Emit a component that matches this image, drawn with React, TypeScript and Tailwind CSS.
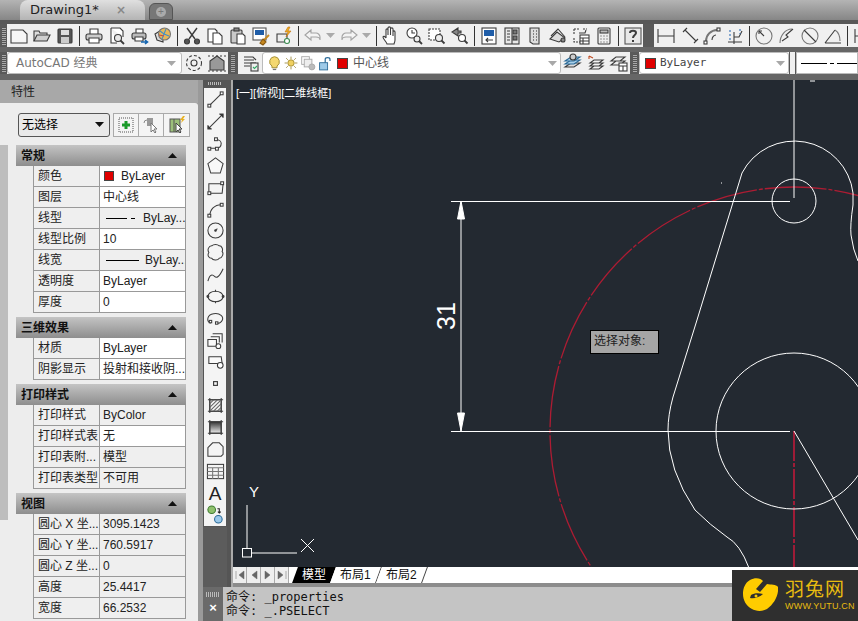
import React from "react";

const S = "#3c3c3c";
const G = "#a3a3a3";
type N = React.ReactNode;
const I = ({ children, size = 20 }: { children: N; size?: number }) => (
  <svg width={size} height={size} viewBox="0 0 20 20" fill="none" stroke={S} strokeWidth="1.1">{children}</svg>
);

const icons: Record<string, N> = {
  new: <path d="M2 4h12l4 4v9H2z" fill="#f6f6f6" />,
  open: <><path d="M2 15V5h5l1 2h7v2" fill="#ddd" /><path d="M2 15l3-6h13l-3 6z" fill="#cfcfcf" /></>,
  save: <><rect x="3" y="3" width="14" height="14" rx="1" fill="#555" /><rect x="6" y="4" width="8" height="5" fill="#ddd" stroke="none" /><rect x="6" y="11" width="8" height="6" fill="#ccc" stroke="none" /></>,
  print: <><path d="M6 8V3h8v5" fill="#fff" /><rect x="2" y="8" width="16" height="6" rx="2" fill="#ccc" /><path d="M5 12h10v5H5z" fill="#fff" /></>,
  preview: <><path d="M4 2h9l3 3v6M4 2v15h6" fill="#fff" /><circle cx="11" cy="12" r="3.5" fill="#e8e8e8" /><path d="M13.5 14.5l3.5 3.5" strokeWidth="1.8" /></>,
  plot: <><path d="M6 7V3h7v4" fill="#fff" /><rect x="2" y="7" width="14" height="6" rx="2" fill="#bbb" /><path d="M5 11h8v4H5z" fill="#fff" /><path d="M11 16h6m-2-2l2.5 2-2.5 2" stroke="#1565b0" strokeWidth="1.6" /></>,
  publish: <><path d="M2 8l8-5v13l-6-2z" fill="#ddd" /><circle cx="11.5" cy="8" r="6" fill="#e6b85a" stroke="#777" /><path d="M7 5l4 3 2-5M9 13l2-5 5 2" stroke="#3f8fc9" /><path d="M6 9l5 1" stroke="#c9473f" /></>,
  cut: <><path d="M5 2l8 11M15 2L7 13" strokeWidth="1.4" /><circle cx="5" cy="15.5" r="2.5" fill="#555" /><circle cx="15" cy="15.5" r="2.5" fill="#555" /></>,
  copy: <><path d="M3 3h7l2 2v11H3z" fill="#fff" /><path d="M8 7h6l3 3v8H8z" fill="#fff" /></>,
  paste: <><rect x="3" y="4" width="11" height="13" rx="1" fill="#c9c9c9" /><rect x="6" y="2" width="5" height="3" fill="#888" /><path d="M9 8h6l2 2v8H9z" fill="#fff" /></>,
  match: <><rect x="2" y="2" width="13" height="12" fill="#fff" stroke="#555" /><rect x="4" y="4" width="9" height="5" fill="#1f5da8" stroke="none" /><path d="M18 9l-6 6" stroke="#c8891f" strokeWidth="1.8" /><path d="M12 13l3 3-3 3-3-2z" fill="#c8891f" stroke="#8a5a10" /></>,
  block: <><path d="M3 8h10v8H3z" fill="#eee" /><circle cx="13" cy="15" r="2.5" fill="#fff" stroke="#3a8a50" /><path d="M14 1l-3 5h3l-2 5 5-6h-3l2-4z" fill="#f0b020" stroke="#c07010" strokeWidth=".6" /></>,
  undo: <path d="M8 4L2 9l6 5v-3h5c2 0 4 1 4 3v-3c0-2-2-4-4-4H8z" stroke={G} fill="#f4f4f4" />,
  redo: <path d="M12 4l6 5-6 5v-3H7c-2 0-4 1-4 3v-3c0-2 2-4 4-4h5z" stroke={G} fill="#f4f4f4" />,
  pan: <path d="M6 18c-1-3-4-5-4-7 0-1 2-1 3 1V4c0-1.500 2-1.500 2 0v5-7c0-1.500 2.500-1.500 2.500 0v7-6c0-1.500 2.500-1.500 2.500 0v7-4c0-1.500 2-1.500 2 0v8c0 2-1 3-1 4z" fill="#fff" />,
  zreal: <><circle cx="8" cy="7" r="5" fill="#fff" /><path d="M8 4v3h3" /><circle cx="13" cy="13" r="3" fill="#eee" /><path d="M15 15l3 3" strokeWidth="1.8" /></>,
  zwin: <><rect x="2" y="3" width="11" height="11" fill="#fff" strokeDasharray="2 1" /><circle cx="12" cy="12" r="3.5" fill="#eee" /><path d="M14.500 14.500l3 3" strokeWidth="1.800" /></>,
  zprev: <><path d="M8 2L2 6l6 4V7h3V5H8z" fill="#888" /><circle cx="12" cy="12" r="3.500" fill="#fff" /><path d="M14.500 14.500l3 3" strokeWidth="1.800" /></>,
  props: <><rect x="3" y="2" width="14" height="16" fill="#fff" /><rect x="5" y="4" width="10" height="6" fill="#1f5da8" stroke="none" /><path d="M14 14H7m2-2l-2 2 2 2" /></>,
  design: <><rect x="3" y="2" width="14" height="16" fill="#e8e8e8" /><path d="M10 2v16" /><path d="M5 5h3M5 8h3M5 11h3M5 14h3" /><rect x="11" y="4" width="4" height="4" fill="#777" /><rect x="11" y="10" width="4" height="4" fill="#777" /></>,
  tools: <><path d="M5 2h9v16H8l-3-2z" fill="#ddd" /><path d="M8 5h1m2 0h1M8 8h1m2 0h1M8 11h1m2 0h1M8 14h1m2 0h1" stroke="#666" strokeWidth="1.500" /></>,
  sheet: <><path d="M2 13l7-7 8 6-6 4z" fill="#ddd" /><path d="M3 10l7-7 7 8" /><circle cx="15" cy="14" r="2" fill="#888" /></>,
  markup: <><path d="M3 3h5M3 3v5M12 3h4M3 12v4h6" strokeDasharray="2 1" /><path d="M8 7h6l1-3" /><rect x="9" y="9" width="9" height="9" fill="#fff" /><path d="M9 12h9M9 15h9M12 12v6" /></>,
  calc: <><rect x="4" y="2" width="12" height="16" rx="1" fill="#eee" /><rect x="6" y="4" width="8" height="3" fill="#bbb" /><path d="M6.500 10h1m2 0h1m2 0h1M6.500 13h1m2 0h1m2 0h1M6.500 16h1m2 0h1m2 0h1" /></>,
  help: <><rect x="2" y="2" width="16" height="16" fill="#e8e8e8" stroke="#555" /><path d="M7 7c0-3 6-3 6 0 0 2-3 2-3 5" strokeWidth="2" /><path d="M10 14v2" strokeWidth="2" /></>,
  dlin: <path d="M2 3v14M18 3v14M2 10h16" />,
  dali: <path d="M4 6l4-4M15 17l4-4M6 4l11 11" />,
  darc: <><path d="M4 15C4 9 9 4 15 4" strokeWidth="1.800" stroke="#777" /><rect x="2" y="15" width="3" height="3" fill="#fff" /><rect x="15" y="2" width="3" height="3" fill="#fff" /><path d="M10 14c0-3 2-5 4-5" /></>,
  dord: <><path d="M3 16h14M9 6v12M9 11h5l3-6" /><path d="M5 4v12M15 3v5" stroke="#2f6db5" strokeDasharray="2 2" /></>,
  drad: <><circle cx="10" cy="10" r="8" stroke="#777" /><path d="M10 10L5 5" /><path d="M5 5h3M5 5v3" /></>,
  djog: <><path d="M3 17C3 10 8 3 15 3" stroke="#777" /><path d="M5 15l6-4-2-2 7-6" /></>,
  ddia: <><circle cx="10" cy="10" r="8" stroke="#777" /><path d="M4 4l12 12" /></>,
  dang: <><path d="M2 17h16M2 17L12 4" /><path d="M12 4c3 2 5 6 5 11" stroke="#777" /></>,
  dq: <><path d="M3 3v14M3 10h8" /><path d="M11 3h6v6" stroke="#d09030" /></>,
  layer: <><path d="M3 4h9l3 3M3 7h10M3 10h12M3 13h6" /><rect x="10" y="10" width="7" height="8" fill="#eee" /><path d="M12 14l1.500 1.500L16 13" stroke="#3a6" /></>,
  bulb: <><path d="M10 2a6 6 0 0 0-3 11v2h6v-2a6 6 0 0 0-3-11z" fill="#f4d870" stroke="#a08a30" /><path d="M8 17h4" stroke="#777" strokeWidth="1.500" /></>,
  sun: <><circle cx="10" cy="10" r="4" fill="#f0d060" stroke="#a08a30" /><path d="M10 2v3M10 15v3M2 10h3M15 10h3M4 4l2 2M14 14l2 2M16 4l-2 2M6 14l-2 2" stroke="#9a8a40" /></>,
  frz: <><rect x="2" y="2" width="9" height="9" stroke="#aaa" /><rect x="5" y="5" width="9" height="9" stroke="#aaa" fill="#eee" /><circle cx="14" cy="14" r="3.500" fill="#bbb" stroke="#aaa" /></>,
  lock: <><rect x="2" y="9" width="10" height="9" fill="#9ecae8" stroke="#2a6a98" /><path d="M9 9V5c0-3 6-3 6 0v2" stroke="#2a6a98" strokeWidth="1.500" /></>,
  lay1: <><path d="M2 14l6-4h9l-6 4z" fill="#dcdcdc" /><path d="M2 11l6-4h9l-6 4z" fill="#a8cfe8" stroke="#2a6a98" /><path d="M2 8l6-4h9l-6 4z" fill="#a8cfe8" stroke="#2a6a98" /><circle cx="10" cy="4" r="3" fill="#ccc" /></>,
  lay2: <><path d="M3 3l4 2M3 3v3" stroke="#c04a20" /><path d="M4 16l4-3h9l-4 3zM4 13l4-3h9l-4 3zM4 10l4-3h9l-4 3z" fill="#f4f4f4" /></>,
  lay3: <><path d="M2 12l5-4h9l-5 4zM2 8l5-4h9l-5 4z" fill="#eee" /><rect x="10" y="10" width="8" height="8" fill="#fff" /><path d="M10 13h8M14 13v5" /></>,
  line: <><path d="M4 16L16 4" /><rect x="2" y="15" width="3" height="3" fill="#fff" /><rect x="15" y="2" width="3" height="3" fill="#fff" /></>,
  xline: <><path d="M3 17L17 3" /><path d="M2 14v4h4M14 2h4v4" fill="#333" /></>,
  pline: <><path d="M4 15h6c5 0 6-3 6-5s-2-4-5-4" /><rect x="2" y="14" width="3" height="3" fill="#fff" /><rect x="10" y="14" width="3" height="3" fill="#fff" /><rect x="9" y="4" width="3" height="3" fill="#fff" /></>,
  poly: <path d="M10 2l8 6-3 10H5L2 8z" fill="#f8f8f8" />,
  rect: <><path d="M3 6h15l-1 10H3z" /><rect x="15.500" y="4" width="3" height="3" fill="#fff" /><rect x="2" y="14.500" width="3" height="3" fill="#fff" /></>,
  arc: <><path d="M4 17c0-7 5-12 12-12" /><rect x="2" y="15" width="3" height="3" fill="#fff" /><rect x="15" y="3.500" width="3" height="3" fill="#fff" /></>,
  circle: <><circle cx="10" cy="10" r="8" /><path d="M10 10l2-2" /><circle cx="10" cy="10" r=".8" fill="#333" /></>,
  cloud: <path d="M6 3c2-2 6-2 8 0 3 0 4 4 3 6 2 2 0 7-3 7-2 3-7 2-8 0-3 0-5-3-3-6-2-3 0-7 3-7z" />,
  spline: <path d="M2 17c2-8 5-7 7-5s5 1 9-8" />,
  ellipse: <><ellipse cx="10" cy="10" rx="8" ry="5.500" /><path d="M10 3v2M10 15v2" /><circle cx="2" cy="10" r="1" fill="#333" /><circle cx="18" cy="10" r="1" fill="#333" /></>,
  earc: <><path d="M5 15C0 13 1 6 8 5c7-1 11 3 9 7-1 2-3 3-5 3" /><rect x="3.500" y="12" width="2.500" height="2.500" fill="#fff" /><rect x="10" y="13.500" width="2.500" height="2.500" fill="#fff" /></>,
  insert: <><path d="M7 3h10v9M5 6h9v6M2 9h9v7H2z" fill="#fafafa" /><circle cx="13" cy="16" r="2.500" fill="#fff" /></>,
  mkblock: <><path d="M3 4h13l1 7H3z" fill="#fafafa" /><circle cx="15" cy="13" r="3" fill="#fff" /></>,
  point: <rect x="8" y="8" width="4" height="4" strokeWidth="1.200" />,
  hatch: <><rect x="4" y="4" width="12" height="12" /><path d="M2 4h16M2 16h16M4 2v16M16 2v16" /><path d="M4 8l4-4M4 12l8-8M4 16L16 4M8 16l8-8M12 16l4-4" stroke="#666" /></>,
  grad: <><defs><linearGradient id="gr" x1="0" y1="0" x2="0" y2="1"><stop offset="0" stopColor="#333" /><stop offset="1" stopColor="#eee" /></linearGradient></defs><rect x="4" y="4" width="12" height="12" fill="url(#gr)" /><path d="M2 4h16M2 16h16M4 2v16M16 2v16" /></>,
  region: <path d="M2 8l5-5h7l4 4v8l-2 2H2z" />,
  table: <><rect x="1.500" y="2.500" width="17" height="15" /><path d="M1.500 6h17M1.500 10h17M1.500 14h17M7 6v12M13 6v12" stroke="#777" /></>,
  add: <><circle cx="6" cy="5" r="4" fill="#8fc06c" stroke="#3d7a30" /><circle cx="13" cy="15" r="4" fill="#9ac8ea" stroke="#2a6a98" /><path d="M12 4h2v4m-1.500-1l1.500 1.500L15.500 7" stroke="#222" /></>,
};

type T = string;
const row1a: T[] = ["new", "open", "save", "|", "print", "preview", "plot", "publish", "|", "cut", "copy", "paste", "match", "block", "|", "undo", "a", "redo", "a", "|", "pan", "zreal", "zwin", "zprev", "|", "props", "design", "tools", "sheet", "markup", "calc", "|", "help"];
const row1b: T[] = ["dlin", "dali", "darc", "dord", "|", "drad", "djog", "ddia", "dang", "|", "dq"];
const side: T[] = ["line", "xline", "pline", "poly", "rect", "arc", "circle", "cloud", "spline", "ellipse", "earc", "insert", "mkblock", "point", "hatch", "grad", "region", "table", "A", "add"];

const Handle = ({ w = "w-[7px]" }: { w?: string }) => (
  <div className={`${w} self-stretch shrink-0 bg-[#5a5a5a] flex items-center justify-center`}>
    <div className="w-[4px] h-[18px] bg-[repeating-linear-gradient(0deg,#aaa_0,#aaa_1px,#555_1px,#555_2px)]" />
  </div>
);

const Bar = ({ items }: { items: T[] }) => (
  <>
    {items.map((k, i) =>
      k === "|" ? (
        <div key={i} className="w-[6px] h-[20px] shrink-0 flex justify-center"><div className="w-[1px] h-full bg-[#333]" /></div>
      ) : k === "a" ? (
        <div key={i} className="w-[13px] shrink-0 flex justify-center"><Tri c="#aaa" /></div>
      ) : (
        <div key={i} className="w-[23px] shrink-0 flex justify-center">
          <I>{icons[k]}</I>
        </div>
      )
    )}
  </>
);

const Tri = ({ c = "#a8a8a8", up = false }: { c?: string; up?: boolean }) => (
  <svg width="9" height="5" viewBox="0 0 9 5"><path d={up ? "M0 5h9L4.500 0z" : "M0 0h9L4.500 5z"} fill={c} /></svg>
);

type R = { l: string; v: N; w?: boolean };
const sections: { t: string; rows: R[] }[] = [
  {
    t: "常规",
    rows: [
      { l: "颜色", w: true, v: <span className="flex items-center"><span className="w-[10px] h-[10px] bg-[#e00000] border border-[#444] ml-[1px] mr-[7px]" />ByLayer</span> },
      { l: "图层", w: true, v: "中心线" },
      { l: "线型", v: <span className="flex items-center"><span className="w-[21px] h-px bg-black ml-[3px]" /><span className="w-[4px] h-px bg-black ml-[4px] mr-[8px]" />ByLay...</span> },
      { l: "线型比例", w: true, v: "10" },
      { l: "线宽", v: <span className="flex items-center"><span className="w-[33px] h-px bg-black ml-[3px] mr-[6px]" />ByLay...</span> },
      { l: "透明度", w: true, v: "ByLayer" },
      { l: "厚度", w: true, v: "0" },
    ],
  },
  { t: "三维效果", rows: [{ l: "材质", w: true, v: "ByLayer" }, { l: "阴影显示", w: true, v: "投射和接收阴..." }] },
  {
    t: "打印样式",
    rows: [
      { l: "打印样式", v: "ByColor" },
      { l: "打印样式表", w: true, v: "无" },
      { l: "打印表附...", v: "模型" },
      { l: "打印表类型", v: "不可用" },
    ],
  },
  {
    t: "视图",
    rows: [
      { l: "圆心 X 坐...", v: "3095.1423" },
      { l: "圆心 Y 坐...", v: "760.5917" },
      { l: "圆心 Z 坐...", v: "0" },
      { l: "高度", v: "25.4417" },
      { l: "宽度", v: "66.2532" },
    ],
  },
];

const PropsPanel = () => (
  <div className="w-[198px] shrink-0 h-full flex flex-col bg-[#9a9a9a] overflow-hidden">
    <div className="h-[23px] shrink-0 flex items-center pl-[11px] text-[12px] text-[#222] bg-[#a8a8a8]">特性</div>
    <div className="flex-1 bg-[#ededed] rounded-tr-[3px] flex min-h-0">
      <div className="w-[8px] shrink-0 flex flex-col pt-[42px]">
        <div className="h-[375px] bg-[#bdbdbd]" />
      </div>
      <div className="flex-1 pl-[8px] pr-[12px]">
        <div className="flex items-center h-[42px] pt-[1px] gap-[3px] pl-[2px]">
          <div className="w-[92px] h-[24px] rounded-[3px] border border-[#555] bg-[#e9e9e9] flex items-center justify-between pl-[3px] pr-[5px] text-[12px]">
            无选择<Tri c="#111" />
          </div>
          <div className="flex h-[24px] border border-[#aaa] bg-[#f4f4f4]">
            <div className="w-[25px] border-r border-[#aaa] flex items-center justify-center">
              <svg width="16" height="16" viewBox="0 0 16 16"><rect x="1" y="1" width="14" height="14" fill="none" stroke="#555" strokeDasharray="1 1" /><path d="M8 4v8M4 8h8" stroke="#1a9a2a" strokeWidth="3" /></svg>
            </div>
            <div className="w-[25px] border-r border-[#aaa] flex items-center justify-center">
              <svg width="18" height="18" viewBox="0 0 18 18"><path d="M2 7a3 3 0 0 1 3-3" stroke="#888" fill="none" /><rect x="5" y="2" width="6" height="8" fill="#999" /><path d="M9 7v9l2-2 2 3 1-1-2-3h3z" fill="#fff" stroke="#777" /></svg>
            </div>
            <div className="w-[25px] flex items-center justify-center">
              <svg width="18" height="18" viewBox="0 0 18 18"><rect x="2" y="3" width="10" height="13" fill="#9cc07a" stroke="#555" /><path d="M6 3v13" stroke="#555" /><path d="M8 7v9l2-2 2 3 1-1-2-3h3z" fill="#fff" stroke="#444" /><path d="M15 0l-3 4h2l-1 3 4-4h-2l2-3z" fill="#e8b020" /></svg>
            </div>
          </div>
        </div>
        <div className="flex flex-col gap-[4px]">
          {sections.map((s) => (
            <div key={s.t} className="w-[170px]">
              <div className="h-[21px] flex items-center justify-between pl-[5px] pr-[9px] text-[12px] font-bold text-[#111] bg-gradient-to-b from-[#c4c4c4] to-[#8e8e8e]">
                {s.t}
                <Tri c="#111" up />
              </div>
              {s.rows.map((r) => (
                <div key={r.l} className="h-[21px] ml-[17px] flex border-l border-r border-b border-[#999] text-[12px] text-[#222] box-border">
                  <div className="w-[66px] shrink-0 bg-[#efefef] border-r border-[#999] pl-[4px] leading-[20px] whitespace-nowrap overflow-hidden">{r.l}</div>
                  <div className={`flex-1 pl-[3px] leading-[20px] whitespace-nowrap overflow-hidden flex items-center ${r.w ? "bg-white" : "bg-[#efefef]"}`}>{r.v}</div>
                </div>
              ))}
            </div>
          ))}
        </div>
      </div>
    </div>
  </div>
);

const Drawing = () => (
  <svg className="block w-full h-full" viewBox="233 80 625 487" fill="none">
    <circle cx="794" cy="431" r="244" stroke="#ad1c33" strokeWidth="1.300" strokeDasharray="62 2 4 2" />
    <path d="M794 431V567" stroke="#c8183a" strokeWidth="1.500" strokeDasharray="30 2 4 2" />
    <g stroke="#fff" strokeWidth="1">
      <path d="M794 80V198M451 201.500H790M451 431.500H790M461 201V431" />
      <circle cx="794" cy="201" r="22" />
      <circle cx="794" cy="431" r="78" />
      <path d="M794 431L858 540" />
      <path d="M749 568Q740 544 727 537Q710 525 695 510Q668 470 668 430Q668 415 673 397L697 320L742 173A59 59 0 0 1 853 193V205Q850 225 851 235Q853 250 858 261" />
      <path d="M461 201l-3.500 18h7zM461 431l-3.500-18h7z" fill="#fff" />
      <path d="M247 505V549M252 553H297M301 539l13 13M314 539l-13 13" />
      <rect x="242.500" y="548.500" width="9" height="8.500" />
      <path d="M721 183h1M810 81h5" />
    </g>
    <text x="254" y="497" fill="#fff" fontSize="15" fontFamily="Liberation Sans" textAnchor="middle">Y</text>
    <text transform="translate(455 316) rotate(-90)" fill="#fff" fontSize="25" fontFamily="Liberation Sans" textAnchor="middle">31</text>
  </svg>
);

const Tab = ({ t, active }: { t: string; active?: boolean }) => (
  <div className={`h-[16px] flex items-center justify-center text-[12px] px-[7px] -skew-x-[20deg] ${active ? "bg-black" : "bg-white border-r border-[#444]"}`}>
    <span className={`skew-x-[20deg] ${active ? "text-white" : "text-[#111]"}`}>{t}</span>
  </div>
);

const NavBtn = ({ d }: { d: string }) => (
  <div className="w-[14px] h-[16px] border-r border-[#aaa] flex items-center justify-center bg-[#eee]">
    <svg width="10" height="10" viewBox="0 0 10 10"><path d={d} fill="#666" stroke="#666" strokeWidth=".5" /></svg>
  </div>
);

const Logo = () => (
  <div className="absolute right-0 bottom-0 w-[126px] h-[51px] bg-[#2f2f2f] flex items-center pl-[10px] gap-[7px]">
    <svg width="36" height="36" viewBox="0 0 36 36">
      <path d="M8 2c5-3 11-2 13 1l-7 8 4 3 7-8c4 1 9 0 11 3 1 8-4 17-11 22-5 3-12 2-15 0C4 28 1 22 1 16 1 10 3 5 8 2z" fill="#ffcc00" />
      <path d="M9 17c3-2 8-2 12-1-3 3-9 5-13 4z" fill="#2f2f2f" />
      <circle cx="14" cy="18" r="1.500" fill="#ffcc00" />
    </svg>
    <div className="flex flex-col text-[#e8bc10] leading-none">
      <span className="text-[19px] tracking-[1px] leading-[21px]">羽兔网</span>
      <span className="text-[9px] font-['Liberation_Sans'] leading-[13px] tracking-[0.2px] whitespace-nowrap">WWW.YUTU.CN</span>
    </div>
  </div>
);

export default function App() {
  return (
    <div className="relative w-[858px] h-[621px] overflow-hidden bg-[#5c5c5c] flex flex-col font-['Liberation_Sans','Noto_Sans_CJK_SC',sans-serif] text-black">
      {/* document tabs */}
      <div className="h-[20px] shrink-0 bg-gradient-to-b from-[#b4b4b4] to-[#868686] flex items-end pl-[20px]">
        <div className="w-[125px] h-[20px] rounded-t-[8px] bg-gradient-to-b from-[#e0e0e0] to-[#b4b4b4] flex items-center justify-between pl-[10px] pr-[19px] text-[13px] font-['DejaVu_Sans'] text-[#222]">
          Drawing1*
          <span className="text-[#888] text-[12px] font-bold">×</span>
        </div>
        <div className="w-[24px] h-[17px] ml-[4px] rounded-t-[6px] bg-[#777] border border-[#555] flex items-center justify-center">
          <span className="w-[10px] h-[10px] rounded-full bg-[#aaa] text-[#777] text-[10px] leading-[10px] text-center">+</span>
        </div>
      </div>
      <div className="h-[4px] shrink-0 bg-[#585858]" />
      {/* toolbar row 1 */}
      <div className="h-[23px] shrink-0 flex items-center bg-[#f0f0f0]">
        <Handle />
        <div className="flex items-center flex-1 min-w-0"><Bar items={row1a} /></div>
        <div className="h-full w-[11px] -ml-[0px] shrink-0 bg-[#5a5a5a]" />
        <div className="flex items-center shrink-0 w-[204px] overflow-hidden"><Bar items={row1b} /></div>
      </div>
      <div className="h-[5px] shrink-0 bg-[#666]" />
      {/* toolbar row 2 */}
      <div className="h-[22px] shrink-0 flex items-center bg-[#f0f0f0]">
        <Handle />
        <div className="w-[175px] h-full bg-white border border-[#bbb] rounded-[3px] flex items-center justify-between pl-[8px] pr-[5px] text-[12px] text-[#777] font-['DejaVu_Sans','Noto_Sans_CJK_SC']">
          AutoCAD 经典<Tri />
        </div>
        <div className="w-[23px] flex justify-center ml-[0px]">
          <I><circle cx="10" cy="10" r="3" /><circle cx="10" cy="10" r="7.500" strokeDasharray="3 2" /></I>
        </div>
        <div className="w-[23px] flex justify-center">
          <I><path d="M3 8l7-5 7 5v9H3z" fill="#999" /><path d="M1 3h18M1 18h18" strokeDasharray="2 2" /></I>
        </div>
        <Handle w="w-[10px]" />
        <div className="w-[24px] flex justify-center pl-[1px]"><I>{icons.layer}</I></div>
        <div className="w-[299px] h-full bg-white border border-[#bbb] rounded-[3px] flex items-center pl-[2px] pr-[3px] text-[12px] text-[#555]">
          <div className="w-[18px] flex justify-center"><I size={17}>{icons.bulb}</I></div>
          <div className="w-[16px] flex justify-center"><I size={16}>{icons.sun}</I></div>
          <div className="w-[19px] flex justify-center"><I size={17}>{icons.frz}</I></div>
          <div className="w-[16px] flex justify-center"><I size={17}>{icons.lock}</I></div>
          <div className="w-[11px] h-[11px] bg-[#e00000] border border-[#444] ml-[3px] mr-[5px]" />
          <span className="flex-1">中心线</span>
          <Tri />
        </div>
        <Bar items={["lay1", "lay2", "lay3"]} />
        <Handle w="w-[9px]" />
        <div className="w-[150px] h-full bg-white border border-[#bbb] rounded-[3px] flex items-center justify-between pl-[5px] pr-[3px] text-[11px] text-[#444] font-['DejaVu_Sans_Mono']">
          <span className="flex items-center gap-[4px]"><span className="w-[11px] h-[11px] bg-[#e00000] border border-[#444]" />ByLayer</span>
          <Tri />
        </div>
        <div className="w-[7px] h-full bg-[#f0f0f0] border-x border-[#555]" />
        <div className="flex-1 h-full bg-white border border-[#bbb] flex items-center pl-[4px] gap-[3px]">
          <span className="w-[26px] h-px bg-black" /><span className="w-[4px] h-px bg-black" /><span className="w-[20px] h-px bg-black" />
        </div>
      </div>
      <div className="h-[6px] shrink-0 bg-[#666]" />
      {/* body */}
      <div className="flex-1 min-h-0 flex">
        <PropsPanel />
        <div className="flex-1 min-w-0 flex flex-col">
          <div className="flex-1 min-h-0 flex">
            <div className="w-[5px] shrink-0 bg-[#9a9a9a]" />
            <div className="w-[24px] shrink-0 flex flex-col">
              <div className="h-[7px] bg-[#555] flex items-center justify-center"><div className="w-[14px] h-[3px] bg-[repeating-linear-gradient(90deg,#bbb_0,#bbb_1px,#555_1px,#555_2px)]" /></div>
              <div className="h-[440px] bg-[#f4f4f4] border border-[#555] flex flex-col pt-[1px]">
                {side.map((k) => (
                  <div key={k} className="h-[21.900px] flex items-center justify-center">
                    {k === "A" ? <span className="text-[19px] leading-none text-[#222]">A</span> : <I size={19}>{icons[k]}</I>}
                  </div>
                ))}
              </div>
            </div>
            <div className="w-[4px] shrink-0 bg-[#555]" />
            <div className="w-[2px] shrink-0 bg-[#aaa]" />
            <div className="flex-1 min-w-0 flex flex-col">
              <div className="relative h-[487px] shrink-0 bg-[#232931]">
                <Drawing />
                <div className="absolute left-[3px] top-[8px] text-[11px] text-white leading-none">[一][俯视][二维线框]</div>
                <div className="absolute left-[357px] top-[250px] w-[69px] h-[24px] bg-[#a5a5a5] border border-black pl-[3px] text-[12px] leading-[21px] text-[#222]">选择对象:</div>
              </div>
              <div className="h-[16px] shrink-0 bg-white flex items-center">
                <NavBtn d="M1 1v8M9 1L4 5l5 4z" />
                <NavBtn d="M8 1L3 5l5 4z" />
                <NavBtn d="M2 1l5 4-5 4z" />
                <NavBtn d="M9 1v8M1 1l5 4-5 4z" />
                <div className="w-[6px]" />
                <Tab t="模型" active />
                <Tab t="布局1" />
                <Tab t="布局2" />
              </div>
              <div className="flex-1 bg-[#8c8c8c]" />
            </div>
          </div>
          <div className="h-[34px] shrink-0 flex bg-[#888]">
            <div className="w-[5px] bg-[#9a9a9a]" />
            <div className="w-[20px] bg-[#6a6a6a] flex flex-col items-center text-white font-bold">
              <div className="h-[14px] w-full flex items-center justify-center"><div className="w-[14px] h-[5px] bg-[repeating-linear-gradient(90deg,#bbb_0,#bbb_1px,#666_1px,#666_2px)]" /></div>
              <span className="text-[13px] leading-[14px]">×</span>
            </div>
            <div className="flex-1 bg-[#c4c4c4] pl-[3px] text-[12px] leading-[14px] font-['DejaVu_Sans_Mono','Noto_Sans_CJK_SC'] text-[#111] pt-[3px]">
              <div>命令: _properties</div>
              <div>命令: _.PSELECT</div>
            </div>
          </div>
        </div>
      </div>
      <Logo />
    </div>
  );
}
